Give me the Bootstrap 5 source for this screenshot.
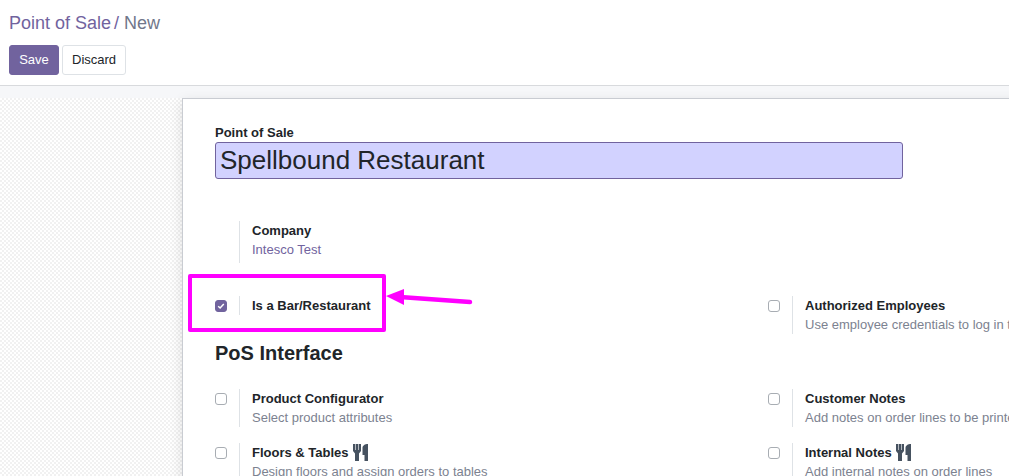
<!DOCTYPE html>
<html lang="en">
<head>
<meta charset="utf-8">
<title>Point of Sale</title>
<link href="https://cdn.jsdelivr.net/npm/bootstrap@5.3.0/dist/css/bootstrap.min.css" rel="stylesheet">
<style>
html,body{height:476px;overflow:hidden}
body{font-family:"Liberation Sans",Arial,sans-serif;font-size:13px;color:#212529;background:#fff}
.topbar{height:86px;border-bottom:1px solid #d8dadd;padding:12px 9px 0 9px;background:#fff}
.crumbs{font-size:18px;line-height:22px;color:#71639e}
.crumbs .sep{color:#71639e;margin:0 5px 0 3px}
.crumbs .cur{color:#71778b}
.actions{margin-top:11px;gap:3px}
.btn-save,.btn-discard{font-size:13px;line-height:20px;padding:4px 9px;height:30px;border-radius:3px}
.btn-save{background:#71639e;border:1px solid #71639e;color:#fff;width:50px}
.btn-discard{background:#fff;border:1px solid #dee2e6;color:#212529;width:64px}
.canvas{height:390px;padding:12px 0 0 182px;background-color:#fff;background-image:conic-gradient(#f1f1f1 25%,#fff 0 50%,#f1f1f1 0 75%,#fff 0);background-size:4px 4px;overflow:hidden;position:relative}
.canvas::before{content:"";position:absolute;left:0;right:0;top:0;height:12px;background:#f6f7f9}
.sheet{position:relative;height:400px;width:900px;background:#fff;border:1px solid #c9ccd2;border-right:0;border-bottom:0;box-shadow:0 4px 12px rgba(0,0,0,.12);padding:27px 0 0 32px}
.sheet-label{font-weight:700;line-height:13px;margin-bottom:3px;display:block}
.name-box{width:688px;height:37px;background:#d2d2ff;border:1px solid #71639e;border-radius:3px;font-size:26px;line-height:35px;padding:0 4px;color:#212529}
.rowline{display:flex}
.cellbox{width:553px;flex:none;display:flex;align-items:flex-start}
.chk{width:24px;flex:none;padding-top:4px}
.tick{display:block;width:12px;height:12px;border:1px solid #a8adb3;border-radius:3px;background:#fff}
.tick.on{background:#71639e;border-color:#71639e;display:flex;align-items:center;justify-content:center}
.setting{border-left:1px solid #dee2e6;padding-left:12px;height:38px;line-height:19px}
.setting.short{height:19px}
.setting-title{font-weight:700;line-height:19px;height:19px;white-space:nowrap}
.setting-desc{color:#7c8290;white-space:nowrap;line-height:19px}
.setting-desc.purple{color:#71639e}
.fork{vertical-align:-4px;margin-left:1px}
.company{margin:42px 0 0 0;padding-left:0}
.company .setting{margin-left:24px;height:42px}
.bar-row{margin-top:33px}
.pos-head{font-size:20px;font-weight:700;line-height:24px;margin:0;padding-top:7px}
.grp1{margin-top:24px}
.grp2{margin-top:16px}
.callout{position:absolute;left:188px;top:274px;width:198px;height:58px;border:4px solid #ff00ff;border-radius:2px;z-index:3;pointer-events:none}
.arrow{position:absolute;left:385px;top:284px;z-index:3}
</style>
</head>
<body>
<header class="topbar">
  <div class="crumbs"><span>Point of Sale</span><span class="sep">/</span><span class="cur">New</span></div>
  <div class="d-flex actions">
    <button type="button" class="btn btn-save">Save</button>
    <button type="button" class="btn btn-discard">Discard</button>
  </div>
</header>
<main class="canvas">
  <div class="sheet">
    <label class="sheet-label">Point of Sale</label>
    <div class="name-box">Spellbound Restaurant</div>
    <div class="company"><div class="setting"><div class="setting-title">Company</div><div class="setting-desc purple">Intesco Test</div></div></div>
    <div class="rowline bar-row">
      <div class="cellbox"><div class="chk"><span class="tick on"><svg width="8" height="8" viewBox="0 0 8 8"><path d="M1.2 4.2 3.1 6 6.8 2" fill="none" stroke="#fff" stroke-width="1.5"/></svg></span></div><div class="setting short"><div class="setting-title">Is a Bar/Restaurant</div></div></div>
      <div class="cellbox"><div class="chk"><span class="tick"></span></div><div class="setting"><div class="setting-title">Authorized Employees</div><div class="setting-desc">Use employee credentials to log in to the PoS session</div></div></div>
    </div>
    <h2 class="pos-head">PoS Interface</h2>
    <div class="rowline grp1">
      <div class="cellbox"><div class="chk"><span class="tick"></span></div><div class="setting"><div class="setting-title">Product Configurator</div><div class="setting-desc">Select product attributes</div></div></div>
      <div class="cellbox"><div class="chk"><span class="tick"></span></div><div class="setting"><div class="setting-title">Customer Notes</div><div class="setting-desc">Add notes on order lines to be printed</div></div></div>
    </div>
    <div class="rowline grp2">
      <div class="cellbox"><div class="chk"><span class="tick"></span></div><div class="setting"><div class="setting-title">Floors &amp; Tables <svg class="fork" width="15" height="17" viewBox="0 0 15 17"><path d="M0 0h2.200v6h.6V0h2.400v6h.6V0H8v7L6 9.500V17H2V9.500L0 7zM9.500 11V4C9.500 1.500 12 0 15 0v17h-3.500v-6z" fill="#465260"/></svg></div><div class="setting-desc">Design floors and assign orders to tables</div></div></div>
      <div class="cellbox"><div class="chk"><span class="tick"></span></div><div class="setting"><div class="setting-title">Internal Notes <svg class="fork" width="15" height="17" viewBox="0 0 15 17"><path d="M0 0h2.200v6h.6V0h2.400v6h.6V0H8v7L6 9.500V17H2V9.500L0 7zM9.500 11V4C9.500 1.500 12 0 15 0v17h-3.500v-6z" fill="#465260"/></svg></div><div class="setting-desc">Add internal notes on order lines</div></div></div>
    </div>
  </div>
</main>
<div class="callout"></div>
<svg class="arrow" width="90" height="26" viewBox="0 0 90 26"><path d="M85 18 15 13" stroke="#ff00ff" stroke-width="4.500" stroke-linecap="round" fill="none"/><path d="M1 12 19 5 19 21z" fill="#ff00ff"/></svg>
</body>
</html>
